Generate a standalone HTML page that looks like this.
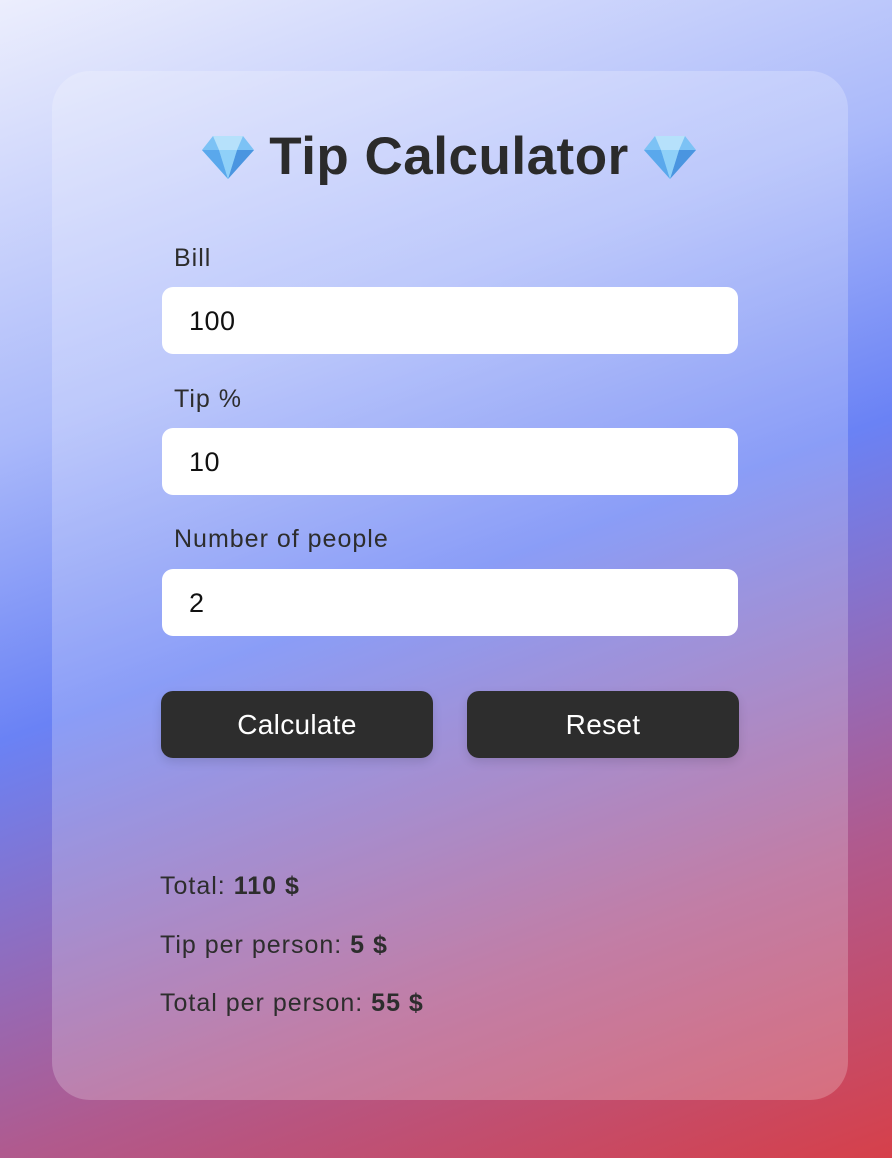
<!DOCTYPE html>
<html><head><meta charset="utf-8"><style>
*{margin:0;padding:0;box-sizing:border-box}
html,body{width:892px;height:1158px;overflow:hidden}
body{background:linear-gradient(160deg,#eceefd 0%,#aab9fa 30%,#6a82f5 50%,#b05a8e 78%,#d6404a 100%);font-family:"Liberation Sans",sans-serif;position:relative;color:#2d2d2d}
.card{position:absolute;left:52px;top:71px;width:796px;height:1029px;border-radius:38px;background:rgba(255,255,255,0.22)}
h1{position:absolute;left:0;top:124px;width:892px;text-align:center;font-size:53px;font-weight:bold;color:#2b2b2b;line-height:66px;letter-spacing:0.5px;padding-left:6px}
.dia{display:inline-block;vertical-align:-6px;width:54px;height:46px;margin:0 14px}
.lbl{position:absolute;left:174px;font-size:25px;color:#2d2d2d;letter-spacing:1px}
.inp{position:absolute;left:162px;width:576px;height:67px;background:#fff;border-radius:11px;font-size:27px;padding-left:27px;line-height:69px;color:#111;letter-spacing:0.5px}
.btn{position:absolute;top:691px;width:272px;height:67px;background:#2d2d2d;border-radius:12px;color:#fff;font-size:28px;text-align:center;line-height:67px;box-shadow:0 4px 10px rgba(0,0,0,.12);letter-spacing:0.3px}
.res{position:absolute;left:160px;font-size:25px;color:#2d2d2d;letter-spacing:1px}
</style></head><body>
<div class="card"></div>
<svg width="0" height="0" style="position:absolute"><defs><g id="d"><polygon points="12,2 42,2 53,16 27,45 1,16" fill="#7cc2f5"/><polygon points="12,2 42,2 36,16 18,16" fill="#b6e1fb"/><polygon points="1,16 18,16 27,45" fill="#5aa8ec"/><polygon points="36,16 53,16 27,45" fill="#4a95e0"/><polygon points="18,16 36,16 27,45" fill="#8fd0f8"/></g></defs></svg>
<h1><svg class="dia" viewBox="0 0 54 46"><use href="#d"/></svg>Tip Calculator<svg class="dia" viewBox="0 0 54 46"><use href="#d"/></svg></h1>
<div class="lbl" style="top:244px">Bill</div>
<div class="inp" style="top:287px">100</div>
<div class="lbl" style="top:385px">Tip %</div>
<div class="inp" style="top:428px">10</div>
<div class="lbl" style="top:525px">Number of people</div>
<div class="inp" style="top:569px">2</div>
<div class="btn" style="left:161px">Calculate</div>
<div class="btn" style="left:467px">Reset</div>
<div class="res" style="top:872px">Total: <b>110 $</b></div>
<div class="res" style="top:931px">Tip per person: <b>5 $</b></div>
<div class="res" style="top:989px">Total per person: <b>55 $</b></div>
</body></html>
